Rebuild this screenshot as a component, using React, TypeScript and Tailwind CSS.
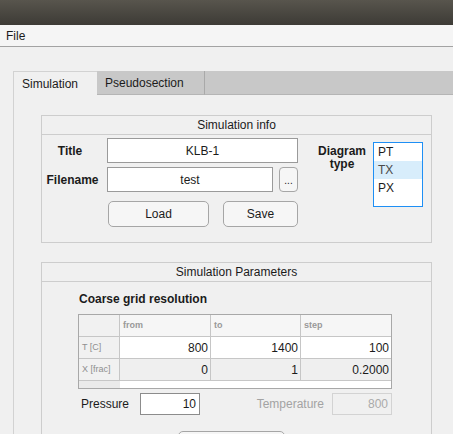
export default function App() {
  const rows = [
    { name: "T [C]", values: ["800", "1400", "100"], bg: "bg-white" },
    { name: "X [frac]", values: ["0", "1", "0.2000"], bg: "bg-[#efefef]" },
  ];

  return (
    <div className="w-[453px] h-[434px] overflow-hidden bg-[#f0f0f0] text-[12px] text-[#1b1b1b] font-['Liberation_Sans',Arial,sans-serif]">
      {/* Window title bar */}
      <div className="h-[25px] bg-gradient-to-b from-[#58554d] to-[#3d3b36]"></div>

      {/* Menu */}
      <div className="h-[22px] bg-[#f5f5f5] border-b border-[#a3a3a3] flex items-center pl-[6px]">
        File
      </div>

      <div className="ml-[13px] mt-[24px]">
        {/* Tabs */}
        <div className="flex h-[24px]">
          <div className="w-[84px] bg-[#f0f0f0] border-l border-t border-[#d2d2d2] pl-[8px] flex items-center">
            Simulation
          </div>
          <div className="w-[108px] bg-[#c8c8c8] border-r border-b border-[#a9a9a9] border-b-[#b5b5b5] pl-[8px] flex items-center">
            Pseudosection
          </div>
          <div className="flex-1 bg-[#c8c8c8] border-b border-[#b5b5b5]"></div>
        </div>

        {/* Tab panel */}
        <div className="border-l border-[#d2d2d2] pl-[27px] pt-[20px] h-[400px]">
          {/* Simulation info */}
          <div className="w-[391px] h-[128px] border border-[#cdcdcd]">
            <div className="h-[19px] border-b border-[#cdcdcd] flex items-center justify-center">
              Simulation info
            </div>
            <div className="flex pt-[3px]">
              <div className="w-[256px]">
                <div className="flex items-center">
                  <div className="w-[56px] text-center font-bold">Title</div>
                  <div className="ml-[9px] w-[191px] h-[25px] bg-white border border-[#9a9a9a] flex items-center justify-center">
                    KLB-1
                  </div>
                </div>
                <div className="flex items-center mt-[4px]">
                  <div className="w-[61px] text-center font-bold">Filename</div>
                  <div className="ml-[4px] w-[166px] h-[25px] bg-white border border-[#9a9a9a] flex items-center justify-center">
                    test
                  </div>
                  <div className="ml-[6px] w-[19px] h-[25px] rounded-[4px] border border-[#a6a6a6] bg-[#f6f6f6] flex items-center justify-center text-[10px] pt-[2px]">
                    ...
                  </div>
                </div>
                <div className="flex mt-[9px] ml-[66px]">
                  <div className="w-[101px] h-[26px] rounded-[5px] border border-[#a6a6a6] bg-[#f6f6f6] flex items-center justify-center">
                    Load
                  </div>
                  <div className="ml-[14px] w-[75px] h-[26px] rounded-[5px] border border-[#a6a6a6] bg-[#f6f6f6] flex items-center justify-center">
                    Save
                  </div>
                </div>
              </div>
              <div className="ml-[13px] w-[62px] pt-[7px] text-center font-bold leading-[13px]">
                Diagram
                <br />
                type
              </div>
              <div className="mt-[4px] w-[50px] h-[65px] border border-[#1e8ff5] bg-white">
                <div className="h-[18px] pl-[4px] leading-[18px]">PT</div>
                <div className="h-[18px] pl-[4px] leading-[18px] bg-[#d8edfb] text-[#4a4a4a]">TX</div>
                <div className="h-[18px] pl-[4px] leading-[18px]">PX</div>
              </div>
            </div>
          </div>

          {/* Simulation Parameters */}
          <div className="mt-[19px] w-[391px] h-[200px] border border-[#cdcdcd]">
            <div className="h-[19px] border-b border-[#cdcdcd] flex items-center justify-center">
              Simulation Parameters
            </div>
            <div className="pt-[10px] pl-[37px] font-bold leading-[14px]">Coarse grid resolution</div>

            <div className="ml-[36px] mt-[8px] w-[314px] border border-[#a8a8a8]">
              <div className="grid grid-cols-[41px_91px_90px_90px] h-[22px] border-b border-[#c6c6c6] bg-[#f6f6f6] text-[9px] font-bold text-[#999999]">
                <div className="border-r border-[#c6c6c6] bg-[#f1f1f1]"></div>
                <div className="border-r border-[#c6c6c6] pl-[3px] flex items-center">from</div>
                <div className="border-r border-[#c6c6c6] pl-[3px] flex items-center">to</div>
                <div className="pl-[3px] flex items-center">step</div>
              </div>
              {rows.map(row => (
                <div key={row.name} className="grid grid-cols-[41px_91px_90px_90px] h-[22px] border-b border-[#c6c6c6]">
                  <div className="border-r border-[#c6c6c6] bg-[#f1f1f1] pl-[3px] flex items-center text-[9px] text-[#8f8f8f]">
                    {row.name}
                  </div>
                  {row.values.map((v, i) => (
                    <div
                      key={i}
                      className={`${row.bg} ${i < 2 ? "border-r border-[#c6c6c6]" : ""} pr-[2px] flex items-center justify-end`}
                    >
                      {v}
                    </div>
                  ))}
                </div>
              ))}
              <div className="flex h-[7px]">
                <div className="w-[41px] bg-[#eaeaea]"></div>
                <div className="flex-1 bg-white"></div>
              </div>
            </div>

            <div className="flex items-center mt-[4px]">
              <div className="ml-[39px] w-[59px]">Pressure</div>
              <div className="w-[60px] h-[22px] bg-white border border-[#8c8c8c] flex items-center justify-end pr-[3px]">
                10
              </div>
              <div className="w-[124px] text-right text-[#a3a3a3]">Temperature</div>
              <div className="ml-[8px] w-[60px] h-[22px] border border-[#d3d3d3] flex items-center justify-end pr-[3px] text-[#aaaaaa]">
                800
              </div>
            </div>

            <div className="mt-[16px] ml-[136px] w-[107px] h-[26px] rounded-[5px] border border-[#a6a6a6] bg-[#f6f6f6]"></div>
          </div>
        </div>
      </div>
    </div>
  );
}
